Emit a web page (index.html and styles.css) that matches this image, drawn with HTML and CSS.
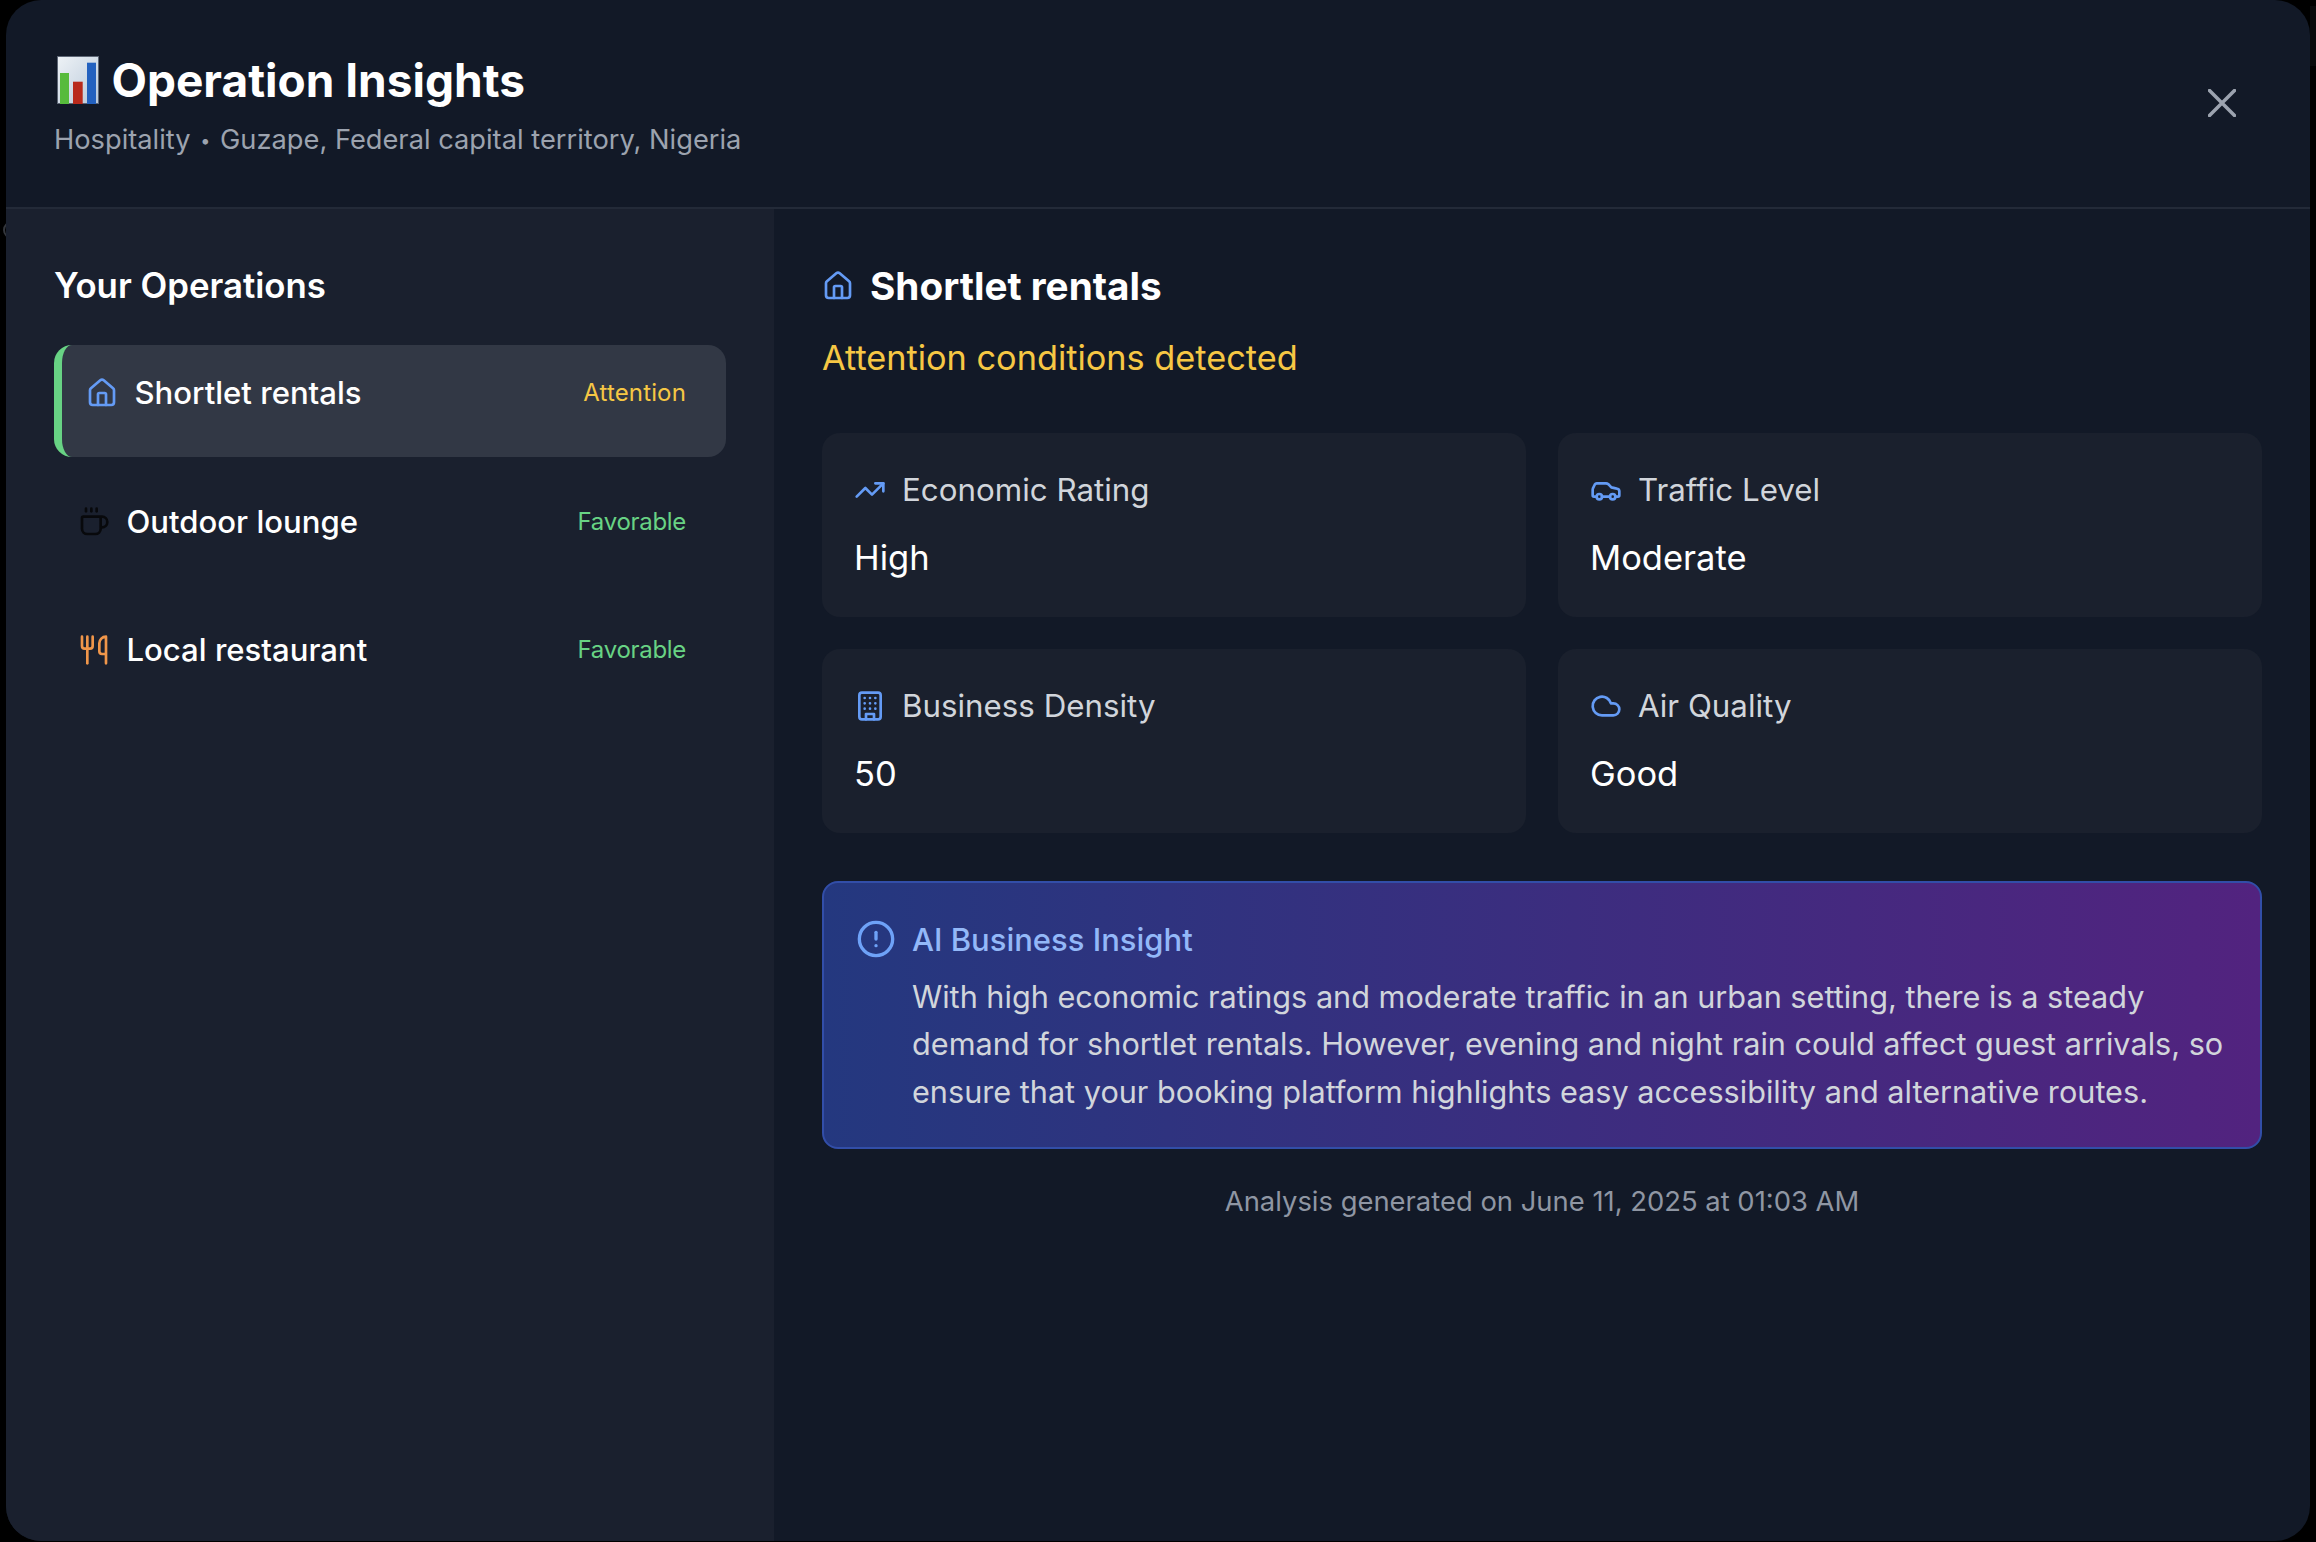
FILE: index.html
```html
<!DOCTYPE html>
<html lang="en">
<head>
<meta charset="utf-8">
<title>Operation Insights</title>
<link rel="stylesheet" href="styles.css">
</head>
<body>
<svg class="backdrop-glyph" viewBox="0 0 24 24" fill="none" stroke="#34373d" stroke-width="2"><circle cx="12" cy="12" r="8"/></svg>
<div class="backdrop-band"></div>
<main class="modal">
  <header class="modal-header">
    <div>
      <h1 class="title">
        <svg class="chart-emoji" viewBox="0 0 42 48">
          <defs>
            <linearGradient id="paper" x1="0" y1="0" x2="1" y2="1">
              <stop offset="0" stop-color="#eef2f6"/>
              <stop offset="1" stop-color="#b9c9da"/>
            </linearGradient>
          </defs>
          <rect x="0.5" y="0.5" width="41" height="47" fill="url(#paper)" stroke="#5d6675"/>
          <rect x="3" y="17" width="9" height="31" fill="#57bb3c"/>
          <rect x="16" y="25.7" width="9.7" height="22.3" fill="#b92a1c"/>
          <rect x="30" y="6.7" width="9" height="41.3" fill="#2361bf"/>
        </svg>
        Operation Insights
      </h1>
      <p class="subtitle">Hospitality <span class="dot">•</span> Guzape, Federal capital territory, Nigeria</p>
    </div>
    <svg class="close" viewBox="0 0 28 28" fill="none" stroke="#9ca3af" stroke-width="3.500" stroke-linecap="round"><path d="M1.500 1.500 26.500 26.500M26.500 1.500 1.500 26.500"/></svg>
  </header>
  <div class="modal-body">
    <aside class="sidebar">
      <h2 class="side-title">Your Operations</h2>
      <div class="op-list">
        <div class="op op-active">
          <div class="op-left">
            <svg class="icon blue" viewBox="0 0 24 24"><path d="M15 21v-8a1 1 0 0 0-1-1h-4a1 1 0 0 0-1 1v8"/><path d="M3 10a2 2 0 0 1 .709-1.528l7-5.999a2 2 0 0 1 2.582 0l7 5.999A2 2 0 0 1 21 10v9a2 2 0 0 1-2 2H5a2 2 0 0 1-2-2z"/></svg>
            <span>Shortlet rentals</span>
          </div>
          <span class="op-status amber">Attention</span>
        </div>
        <div class="op">
          <div class="op-left">
            <svg class="icon dark" viewBox="0 0 24 24"><path d="M10 2v2"/><path d="M14 2v2"/><path d="M16 8a1 1 0 0 1 1 1v8a4 4 0 0 1-4 4H7a4 4 0 0 1-4-4V9a1 1 0 0 1 1-1h14a4 4 0 1 1 0 8h-1"/><path d="M6 2v2"/></svg>
            <span>Outdoor lounge</span>
          </div>
          <span class="op-status green">Favorable</span>
        </div>
        <div class="op">
          <div class="op-left">
            <svg class="icon orange" viewBox="0 0 24 24"><path d="M3 2v7c0 1.100.9 2 2 2h4a2 2 0 0 0 2-2V2"/><path d="M7 2v20"/><path d="M21 15V2a5 5 0 0 0-5 5v6c0 1.100.9 2 2 2h3Zm0 0v7"/></svg>
            <span>Local restaurant</span>
          </div>
          <span class="op-status green">Favorable</span>
        </div>
      </div>
    </aside>
    <section class="content">
      <h2 class="content-title">
        <svg class="icon blue" viewBox="0 0 24 24"><path d="M15 21v-8a1 1 0 0 0-1-1h-4a1 1 0 0 0-1 1v8"/><path d="M3 10a2 2 0 0 1 .709-1.528l7-5.999a2 2 0 0 1 2.582 0l7 5.999A2 2 0 0 1 21 10v9a2 2 0 0 1-2 2H5a2 2 0 0 1-2-2z"/></svg>
        Shortlet rentals
      </h2>
      <p class="condition">Attention conditions detected</p>
      <div class="metrics">
        <div class="metric">
          <div class="metric-label"><svg class="icon blue" viewBox="0 0 24 24"><path d="M22 7 13.500 15.500 8.500 10.500 2 17"/><path d="M16 7h6v6"/></svg>Economic Rating</div>
          <div class="metric-value">High</div>
        </div>
        <div class="metric">
          <div class="metric-label"><svg class="icon blue" viewBox="0 0 24 24"><path d="M19 17h2c.6 0 1-.4 1-1v-3c0-.9-.7-1.700-1.500-1.900C18.700 10.600 16 10 16 10s-1.300-1.400-2.200-2.300c-.5-.4-1.100-.7-1.800-.7H5c-.6 0-1.100.4-1.400.9l-1.400 2.900A3.700 3.700 0 0 0 2 12v4c0 .6.4 1 1 1h2"/><circle cx="7" cy="17" r="2"/><path d="M9 17h6"/><circle cx="17" cy="17" r="2"/></svg>Traffic Level</div>
          <div class="metric-value">Moderate</div>
        </div>
        <div class="metric">
          <div class="metric-label"><svg class="icon blue" viewBox="0 0 24 24"><rect x="4" y="2" width="16" height="20" rx="2"/><path d="M9 22v-4h6v4"/><path d="M8 6h.01M16 6h.01M12 6h.01M12 10h.01M12 14h.01M16 10h.01M16 14h.01M8 10h.01M8 14h.01"/></svg>Business Density</div>
          <div class="metric-value">50</div>
        </div>
        <div class="metric">
          <div class="metric-label"><svg class="icon blue" viewBox="0 0 24 24"><path d="M17.500 19H9a7 7 0 1 1 6.710-9h1.790a4.500 4.500 0 1 1 0 9Z"/></svg>Air Quality</div>
          <div class="metric-value">Good</div>
        </div>
      </div>
      <div class="insight">
        <svg class="icon insight-icon" viewBox="0 0 24 24"><circle cx="12" cy="12" r="10"/><path d="M12 8v4"/><path d="M12 16h.01"/></svg>
        <div>
          <div class="insight-title">AI Business Insight</div>
          <p class="insight-text">With high economic ratings and moderate traffic in an urban setting, there is a steady demand for shortlet rentals. However, evening and night rain could affect guest arrivals, so ensure that your booking platform highlights easy accessibility and alternative routes.</p>
        </div>
      </div>
      <p class="generated">Analysis generated on June 11, 2025 at 01:03 AM</p>
    </section>
  </div>
</main>
</body>
</html>
```
FILE: styles.css
```css
* { box-sizing: border-box; }
html, body { margin: 0; height: 100%; }
body {
  position: relative;
  height: 1542px;
  overflow: hidden;
  background: #000;
  font-family: "Inter", "Liberation Sans", sans-serif;
  color: #fff;
  padding: 0 6px 1px;
}
h1, h2, p { margin: 0; }

.backdrop-glyph {
  position: absolute;
  left: 0;
  top: 218px;
  width: 24px;
  height: 24px;
}
.backdrop-band {
  position: absolute;
  right: 0;
  top: 6px;
  width: 6px;
  height: 60px;
  background: #08090b;
}

.modal {
  position: relative;
  height: 100%;
  display: flex;
  flex-direction: column;
  background: #121927;
  border-radius: 35px;
  overflow: hidden;
}

.modal-header {
  height: 209px;
  flex: none;
  display: flex;
  justify-content: space-between;
  align-items: flex-start;
  padding: 52px 74px 0 48px;
  border-bottom: 2px solid #232a38;
}
.title {
  display: flex;
  align-items: center;
  gap: 12.500px;
  font-size: 46px;
  font-weight: 700;
  line-height: 56px;
}
.chart-emoji { width: 42px; height: 48px; flex: none; margin-left: 3px; }
.subtitle {
  margin-top: 13.500px;
  font-size: 27.250px;
  line-height: 36px;
  color: #9ca3af;
}
.dot { font-size: 18px; margin: 0 2px; vertical-align: 2px; }
.close { width: 28px; height: 28px; margin-top: 37px; }

.modal-body { flex: 1; display: flex; min-height: 0; }

.sidebar {
  width: 768px;
  flex: none;
  background: #1a202e;
  padding: 0 48px;
}
.side-title {
  margin-top: 55.500px;
  font-size: 34.800px;
  line-height: 40px;
  font-weight: 600;
}
.op-list {
  margin-top: 40.500px;
  display: flex;
  flex-direction: column;
  gap: 16.500px;
}
.op {
  height: 112px;
  display: flex;
  justify-content: space-between;
  align-items: flex-start;
  padding: 30px 40px 0 24px;
  border-radius: 18px;
  font-size: 31.100px;
  font-weight: 500;
  line-height: 36px;
}
.op-active {
  background: #323845;
  border-left: 8px solid #68d384;
}
.op-left { display: flex; align-items: center; gap: 16.500px; }
.op-status { font-size: 24px; font-weight: 400; }
.amber { color: #f6c744; letter-spacing: 0.15px; }
.green { color: #68d384; letter-spacing: -0.3px; }

.icon {
  width: 32px;
  height: 32px;
  flex: none;
  fill: none;
  stroke: currentColor;
  stroke-width: 2;
  stroke-linecap: round;
  stroke-linejoin: round;
}
.blue { color: #649bf5; }
.dark { color: #08090c; }
.orange { color: #f0964a; }

.content {
  flex: 1;
  min-width: 0;
  padding: 0 48px;
}
.content-title {
  margin-top: 55px;
  display: flex;
  align-items: center;
  gap: 16px;
  font-size: 38.700px;
  font-weight: 700;
  line-height: 44px;
}
.condition {
  margin-top: 28px;
  font-size: 34.300px;
  line-height: 44px;
  color: #f6c744;
}
.metrics {
  margin-top: 53px;
  display: grid;
  grid-template-columns: 1fr 1fr;
  gap: 32px;
}
.metric {
  height: 184px;
  background: #1a202d;
  border-radius: 18px;
  padding: 37px 32px 0;
}
.metric-label {
  display: flex;
  align-items: center;
  gap: 16px;
  font-size: 31.300px;
  line-height: 40px;
  color: #d1d5db;
}
.metric-value {
  margin-top: 28px;
  font-size: 34.500px;
  line-height: 40px;
}
.insight {
  margin-top: 48px;
  height: 268px;
  display: flex;
  align-items: flex-start;
  gap: 16px;
  padding: 37px 32px 0;
  background: linear-gradient(90deg, #24387f, #52237f);
  border: 2px solid #324ea8;
  border-radius: 16px;
}
.insight-icon { width: 40px; height: 40px; margin-top: -1px; color: #6ea2f8; }
.insight-title {
  font-size: 31px;
  line-height: 40px;
  font-weight: 500;
  color: #93b8f8;
}
.insight-text {
  margin-top: 12.500px;
  font-size: 30.650px;
  line-height: 47.500px;
  color: #d1d5db;
}
.generated {
  margin-top: 35px;
  text-align: center;
  font-size: 27.400px;
  line-height: 34px;
  color: #8f96a3;
}
```
